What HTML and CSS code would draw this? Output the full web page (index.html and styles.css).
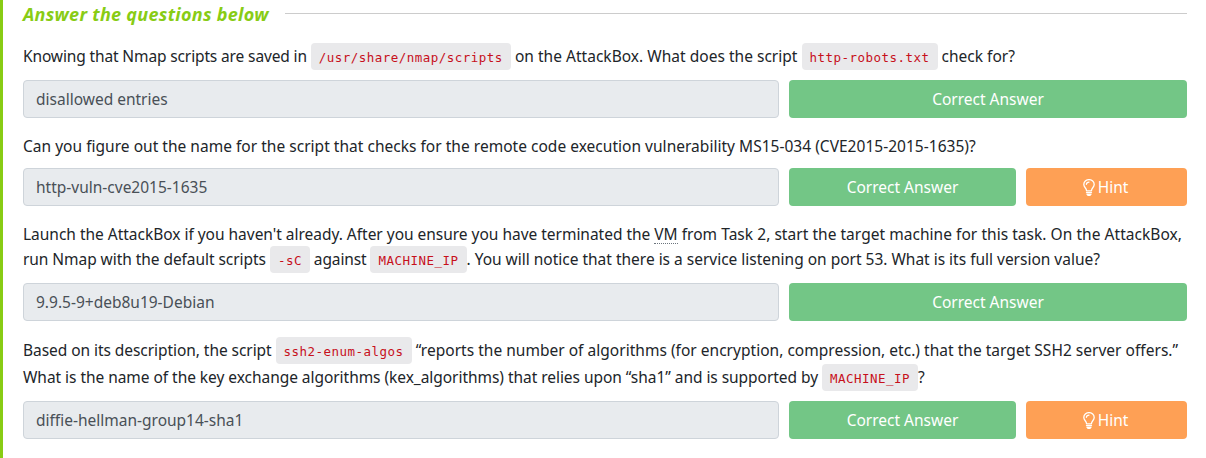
FILE: index.html
```
<!DOCTYPE html>
<html lang="en">
<head>
<meta charset="utf-8">
<title>Task questions</title>
<link rel="stylesheet" href="styles.css">
</head>
<body>
<svg class="symbols" aria-hidden="true"><symbol id="bulb" viewBox="0 0 12 17"><path d="M3.500 11.500C3.500 9 .8 8.400 .8 5.500A5.200 4.900 0 0 1 11.200 5.500C11.200 8.400 8.500 9 8.500 11.500M3.500 11.800h5M3.500 13.700h5M4 15.300h4M4.800 16.300h2.400M3.400 5.300Q3.600 3.200 6 3.100" fill="none" stroke="currentColor" stroke-width="1.300" stroke-linecap="round"/></symbol></svg>
<main class="task">
  <header class="heading"><h2>Answer the questions below</h2><span class="rule"></span></header>

  <section class="question">
    <div class="line with-code"><span class="r1">Knowing that Nmap scripts are saved in </span><code>/usr/share/nmap/scripts</code><span class="r2"> on the AttackBox. What does the script </span><code>http-robots.txt</code><span class="r3"> check for?</span></div>
    <div class="answer"><div class="field">disallowed entries</div><div class="button correct">Correct Answer</div></div>
  </section>

  <section class="question">
    <div class="line"><span class="r4">Can you figure out the name for the script that checks for the remote code execution vulnerability MS15-034 (CVE2015-2015-1635)?</span></div>
    <div class="answer hinted"><div class="field">http-vuln-cve2015-1635</div><div class="button correct">Correct Answer</div><div class="button hint"><svg class="bulb"><use href="#bulb"/></svg>Hint</div></div>
  </section>

  <section class="question">
    <div class="line"><span class="r5">Launch the AttackBox if you haven't already. After you ensure you have terminated the <abbr>VM</abbr></span><span class="r6"> from Task 2, start the target machine for this task. On the AttackBox,</span></div>
    <div class="line with-code"><span class="r7">run Nmap with the default scripts </span><code>-sC</code><span class="r8"> against </span><code>MACHINE_IP</code><span class="r9">. You will notice that there is a service listening on port 53. What is its full version value?</span></div>
    <div class="answer"><div class="field">9.9.5-9+deb8u19-Debian</div><div class="button correct">Correct Answer</div></div>
  </section>

  <section class="question">
    <div class="line with-code"><span class="r10">Based on its description, the script </span><code>ssh2-enum-algos</code><span class="r11"> “reports the number of algorithms (for encryption, compression, etc.) that the target SSH2 server offers.”</span></div>
    <div class="line with-code"><span class="r12">What is the name of the key exchange algorithms (kex_algorithms) that relies upon “sha1” and is supported by </span><code>MACHINE_IP</code><span class="r13">?</span></div>
    <div class="answer hinted"><div class="field">diffie-hellman-group14-sha1</div><div class="button correct">Correct Answer</div><div class="button hint"><svg class="bulb"><use href="#bulb"/></svg>Hint</div></div>
  </section>
</main>
</body>
</html>
```
FILE: styles.css
```
* { box-sizing: border-box; }
body { margin: 0; background: #fff; color: #212529; font: 15.5px/24px "Noto Sans", "Open Sans", sans-serif; }
.symbols { display: none; }
.task { height: 458px; overflow: hidden; border-left: 3px solid #88cc14; padding: 0 19px 0 20px; }
.heading { display: flex; height: 27px; }
.heading h2 { margin: 2px 0 0; width: 262px; font-size: 18px; letter-spacing: .29px; line-height: 24px; font-style: italic; font-weight: 700; color: #88cc14; white-space: nowrap; }
.rule { flex: 1; height: 1px; margin-top: 13px; background: #ccc; }
.question { margin-top: 16px; }
.line { display: flex; align-items: center; white-space: pre; }
.with-code span { padding-bottom: 2px; }
.r1 { letter-spacing: -.13px; }
.r2, .r4, .r11 { letter-spacing: .022px; }
.r5 { letter-spacing: -.02px; }
.r6 { letter-spacing: .04px; }
.r7, .r10 { letter-spacing: -.057px; }
.r8 { letter-spacing: -.11px; }
.r9 { letter-spacing: -.01px; }
.r12 { letter-spacing: -.045px; }
code { height: 27px; padding: 3px 8px 0; border-radius: 4px; background: #e9e9eb; color: #c7101b; font: 12.5px/24px "DejaVu Sans Mono", monospace; letter-spacing: .475px; }
abbr { border-bottom: 1px dotted #6c757d; display: inline-block; line-height: 17px; }
.answer { display: grid; grid-template-columns: 756px 398px; gap: 10px; margin-top: 10px; }
.answer.hinted { grid-template-columns: 756px 227px 161px; }
.field, .button { height: 38px; border-radius: 4px; line-height: 38px; }
.field { border: 1px solid #ced4da; background: #e8ebee; padding-left: 12px; line-height: 36px; color: #495057; }
.button { display: flex; align-items: center; justify-content: center; color: #fff; }
.correct { background: #73c686; }
.hint { background: #fea055; gap: 3px; }
.bulb { width: 12px; height: 17px; margin-left: -2px; }
```
